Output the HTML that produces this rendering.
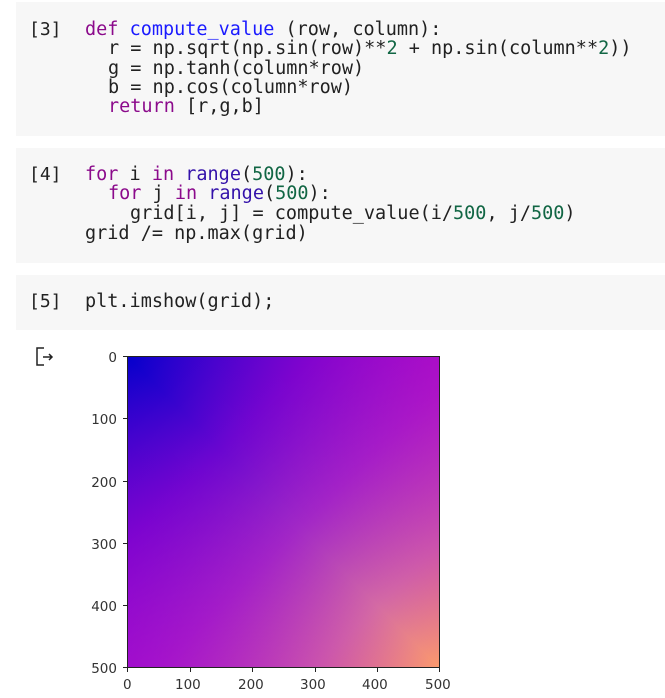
<!DOCTYPE html>
<html><head><meta charset="utf-8"><style>
body{margin:0;width:665px;height:698px;background:#fff;position:relative;overflow:hidden;font-family:"DejaVu Sans Mono","Liberation Mono",monospace;}
.cell{position:absolute;left:16px;width:649px;background:#f7f7f7;}
.l{position:absolute;font-size:18.5px;line-height:19px;white-space:pre;color:#212121;}
.num{position:absolute;left:13px;font-size:18px;line-height:19px;color:#212121;}
.k{color:#8b0a8b}.f{color:#1a1aff}.n{color:#116644}.b{color:#3311aa}
.ax{position:absolute;font-family:"DejaVu Sans","Liberation Sans",sans-serif;font-size:13.5px;color:#333;}
</style></head><body>
<div class="cell" style="top:2px;height:134px">
<div class="num" style="top:18px">[3]</div>
<div class="l" style="left:69px;top:18px"><span class="k">def</span> <span class="f">compute_value</span> (row, column):</div>
<div class="l" style="left:92px;top:37px">r = np.sqrt(np.sin(row)**<span class="n">2</span> + np.sin(column**<span class="n">2</span>))</div>
<div class="l" style="left:92px;top:57px">g = np.tanh(column*row)</div>
<div class="l" style="left:92px;top:76px">b = np.cos(column*row)</div>
<div class="l" style="left:92px;top:95px"><span class="k">return</span> [r,g,b]</div>
</div>
<div class="cell" style="top:148px;height:115px">
<div class="num" style="top:17px">[4]</div>
<div class="l" style="left:69px;top:17px"><span class="k">for</span> i <span class="k">in</span> <span class="b">range</span>(<span class="n">500</span>):</div>
<div class="l" style="left:92px;top:36px"><span class="k">for</span> j <span class="k">in</span> <span class="b">range</span>(<span class="n">500</span>):</div>
<div class="l" style="left:114px;top:56px">grid[i, j] = compute_value(i/<span class="n">500</span>, j/<span class="n">500</span>)</div>
<div class="l" style="left:69px;top:76px">grid /= np.max(grid)</div>
</div>
<div class="cell" style="top:275px;height:55px">
<div class="num" style="top:17px">[5]</div>
<div class="l" style="left:69px;top:17px">plt.imshow(grid);</div>
</div>
<svg style="position:absolute;left:0;top:0" width="665" height="698">
<defs>
<linearGradient id="g" x1="0" y1="0" x2="1" y2="1">
<stop offset="0" stop-color="#0400cc"/>
<stop offset="0.3" stop-color="#6a06d0"/>
<stop offset="0.55" stop-color="#a228c6"/>
<stop offset="0.8" stop-color="#d46aa4"/>
<stop offset="1" stop-color="#fc9a6c"/>
</linearGradient>
<linearGradient id="h" x1="0" y1="1" x2="1" y2="0">
<stop offset="0" stop-color="#a800d0" stop-opacity="0.6"/>
<stop offset="0.5" stop-color="#a800cc" stop-opacity="0"/>
<stop offset="1" stop-color="#b800c8" stop-opacity="0.6"/>
</linearGradient>
</defs>
<g fill="none" stroke="#222" stroke-width="1.5">
<path d="M44 348h-7v17h7M43 357h9M49 354l3 3-3 3"/>
</g>
<rect x="127" y="356" width="313" height="312" fill="url(#g)"/>
<rect x="127" y="356" width="313" height="312" fill="url(#h)"/>
<rect x="127.5" y="356.5" width="312" height="311" fill="none" stroke="#222" stroke-width="1"/>
<g stroke="#222" stroke-width="1">
<path d="M123 356.5h4M123 418.5h4M123 481.5h4M123 543.5h4M123 605.5h4M123 667.5h4"/>
<path d="M127.5 668v4M190.5 668v4M252.5 668v4M315.5 668v4M377.5 668v4M439.5 668v4"/>
</g>
</svg>
<div class="ax" style="right:548px;top:350px">0</div>
<div class="ax" style="right:548px;top:412px">100</div>
<div class="ax" style="right:548px;top:475px">200</div>
<div class="ax" style="right:548px;top:537px">300</div>
<div class="ax" style="right:548px;top:599px">400</div>
<div class="ax" style="right:548px;top:661px">500</div>
<div class="ax" style="left:123px;top:677px">0</div>
<div class="ax" style="left:175px;top:677px">100</div>
<div class="ax" style="left:238px;top:677px">200</div>
<div class="ax" style="left:300px;top:677px">300</div>
<div class="ax" style="left:362px;top:677px">400</div>
<div class="ax" style="left:425px;top:677px">500</div>
</body></html>
